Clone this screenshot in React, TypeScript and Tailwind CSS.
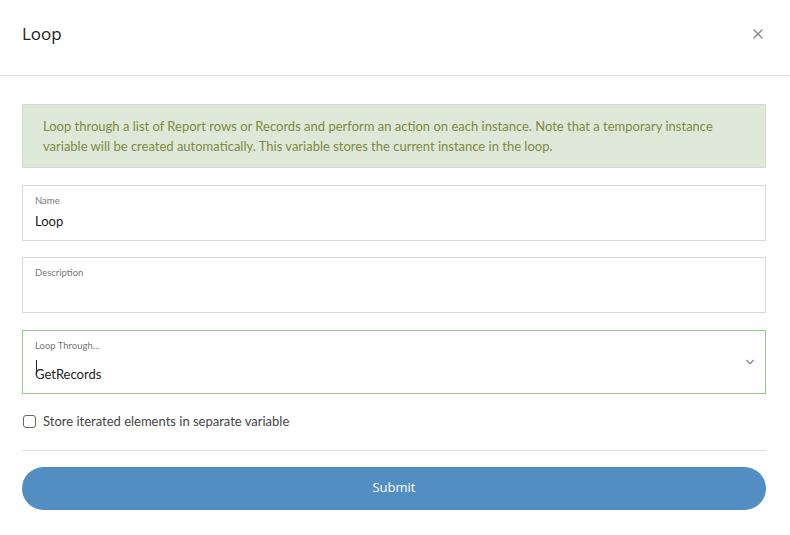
import { FiChevronDown, FiX } from "react-icons/fi";

const font = { fontFamily: "Lato, 'Noto Sans', sans-serif" };

const Field = ({
  label,
  value,
  tall,
  active,
  chevron,
}: {
  label: string;
  value?: string;
  tall?: boolean;
  active?: boolean;
  chevron?: boolean;
}) => (
  <div
    className={`relative flex flex-col border px-[12px] ${
      active ? "border-[#94c98e] h-[64px] pt-[9px]" : "border-[#d9d9d9] h-[56px] pt-[9px]"
    }`}
  >
    <span className="text-[9.5px] leading-[12px] text-[#777]">{label}</span>
    <span
      className={`text-[13px] leading-[16px] text-[#222] ${
        tall ? "mt-[14px]" : "mt-[6px]"
      }`}
    >
      {value}
    </span>
    {active && (
      <span className="absolute left-[13px] top-[29px] h-[14px] w-px bg-[#222]" />
    )}
    {chevron && (
      <FiChevronDown
        size={14}
        className="absolute right-[8px] top-[24px] text-[#888]"
      />
    )}
  </div>
);

export default function App() {
  return (
    <div className="w-[790px] h-[535px] bg-white" style={font}>
      <div className="flex h-[76px] items-center justify-between border-b border-[#dedede] px-[22px] pb-[8px]">
        <h2
          className="text-[17px] text-[#222]"
          style={{ fontFamily: "'Open Sans', sans-serif" }}
        >
          Loop
        </h2>
        <FiX size={16} className="text-[#888] mr-[2px]" />
      </div>

      <div className="flex flex-col pl-[22px] pr-[24px] pt-[28px]">
        <div className="border border-[#cfe0c7] bg-[#dde8d9] px-[20px] py-[11px] text-[13px] leading-[20px] text-[#7f8a3e]">
          Loop through a list of Report rows or Records and perform an action on
          each instance. Note that a temporary instance variable will be created
          automatically. This variable stores the current instance in the loop.
        </div>

        <div className="mt-[17px] flex flex-col gap-[16px]">
          <Field label="Name" value="Loop" />
          <div className="flex flex-col pb-px">
            <Field label="Description" />
          </div>
          <Field label="Loop Through..." value="GetRecords" tall active chevron />
        </div>

        <label className="mt-[18px] flex items-center gap-[7px] text-[13px] text-[#444]">
          <span className="ml-px h-[13px] w-[13px] rounded-[3px] border border-[#666]" />
          Store iterated elements in separate variable
        </label>

        <div className="mt-[18px] border-t border-[#dcdcdc]" />

        <button
          className="mt-[16px] h-[43px] rounded-full bg-[#528ec2] text-[13px] text-white"
          style={{ fontFamily: "'Open Sans', sans-serif" }}
        >
          Submit
        </button>
      </div>
    </div>
  );
}
